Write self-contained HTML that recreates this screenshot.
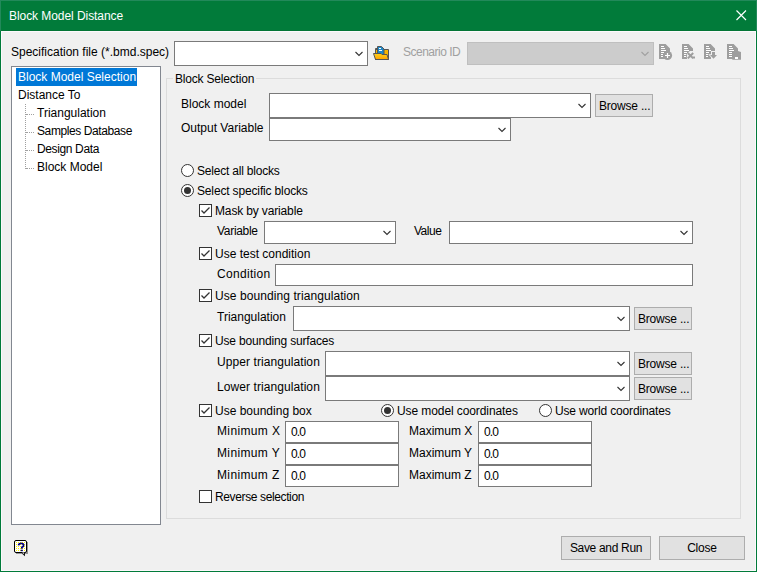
<!DOCTYPE html>
<html><head><meta charset="utf-8">
<style>
*{margin:0;padding:0;box-sizing:border-box}
html,body{width:757px;height:572px;overflow:hidden;background:#F0F0F0}
body{position:relative;font-family:"Liberation Sans",sans-serif;font-size:12px;color:#000}
.a{position:absolute}
.t{position:absolute;white-space:nowrap;line-height:14px;height:14px}
.box{position:absolute;background:#fff;border:1px solid #7A7A7A}
.btn{position:absolute;background:#E1E1E1;border:1px solid #ADADAD;text-align:left;line-height:14px;padding-top:4px;padding-left:3px;white-space:nowrap;letter-spacing:-0.2px}
.chev{position:absolute;width:9px;height:6px}
.cb{position:absolute;width:13px;height:13px;border:1px solid #333;background:#fff}
.rd{position:absolute;width:13px;height:13px;border:1px solid #333;border-radius:50%;background:#fff}
.rd.on::after{content:"";position:absolute;left:2px;top:2px;width:7px;height:7px;border-radius:50%;background:#333}
</style></head><body>
<!-- window frame -->
<div class="a" style="left:0;top:0;width:757px;height:572px;background:#017B3A"></div>
<div class="a" style="left:0;top:0;width:757px;height:1px;background:#22895A"></div>
<div class="a" style="left:0;top:0;width:1px;height:31px;background:#22895A"></div>
<div class="a" style="left:756px;top:0;width:1px;height:31px;background:#22895A"></div>
<div class="a" style="left:1px;top:30px;width:755px;height:1px;background:#037535"></div>
<div class="a" style="left:1px;top:31px;width:755px;height:540px;background:#FCF9FC"></div>
<div class="a" style="left:2px;top:32px;width:753px;height:538px;background:#F0F0F0"></div>
<div class="t" style="left:9px;top:9px;color:#fff;letter-spacing:-0.063px">Block Model Distance</div>
<svg class="a" style="left:735px;top:9px" width="13" height="13" viewBox="0 0 13 13"><path d="M1.5 1.5L11 11M11 1.5L1.5 11" stroke="#fff" stroke-width="1.15"/></svg>

<!-- top row -->
<div class="t" style="left:11px;top:45px">Specification file (*.bmd.spec)</div>
<div class="box" style="left:174px;top:41px;width:194px;height:25px"></div>
<svg class="chev" style="left:355px;top:51px" viewBox="0 0 9 6"><path d="M0.5 1L4 4.5L7.5 1" fill="none" stroke="#333" stroke-width="1.1"/></svg>
<svg class="a" style="left:372px;top:45px" width="18" height="16" viewBox="0 0 18 16">
  <defs><linearGradient id="fg" x1="0" y1="0" x2="0" y2="1"><stop offset="0" stop-color="#FFD41C"/><stop offset="1" stop-color="#FFA200"/></linearGradient></defs>
  <path d="M3.5 3.5H6V14.5H3.5Z" fill="#FFC107" stroke="#555"/>
  <path d="M3.5 4.5H16.5V14.5H3.5Z" fill="#F8B500" stroke="#555"/>
  <path d="M5.5 1.5H9.5L12 4V9.5H5.5Z" fill="#1E88C8" stroke="#555"/>
  <path d="M7 3.5H9M7 5.5H10" stroke="#fff"/>
  <path d="M1.5 8.5H9L10 9.5H15L16.5 14.5H3.5Z" fill="url(#fg)" stroke="#555" stroke-linejoin="round"/>
</svg>
<div class="t" style="left:403px;top:45px;color:#A0A0A0;letter-spacing:-0.500px">Scenario ID</div>
<div class="a" style="left:467px;top:42px;width:187px;height:23px;background:#CCCCCC;border:1px solid #BFBFBF"></div>
<svg class="chev" style="left:641px;top:51px" viewBox="0 0 9 6"><path d="M0.5 1L4 4.5L7.5 1" fill="none" stroke="#A0A0A0" stroke-width="1.1"/></svg>
<svg class="a" style="left:656px;top:42px" width="90" height="20" viewBox="0 0 90 20" shape-rendering="geometricPrecision">
 <g fill="#9E9E9E">
  <path d="M3 2H9.6L14 6.5V11H12V17H3Z"/>
  <circle cx="11.5" cy="13.5" r="4.6"/>
 </g>
 <g stroke="#fff" stroke-width="1">
  <path d="M5 4.5H8M5 6.5H9M5 8.5H10M5 10.5H8M5 12.5H7M5 14.5H7"/>
  <path d="M9 13.5H14M11.5 11V16" stroke-width="1.2"/>
 </g>
 <g transform="translate(23,0)">
  <path d="M3 2H9.6L14 6.5V9H11L8 12V17H3Z" fill="#9E9E9E"/>
  <path d="M5 4.5H8M5 6.5H9M5 8.5H10M5 10.5H8M5 12.5H7M5 14.5H7" stroke="#fff"/>
  <path d="M8.8 11L14.2 16.4M14.2 11L8.8 16.4" stroke="#F0F0F0" stroke-width="4"/>
  <path d="M8.8 11L14.2 16.4M14.2 11L8.8 16.4M13.8 15.5H16" stroke="#9E9E9E" stroke-width="2"/>
 </g>
 <g transform="translate(45,0)">
  <path d="M3 2H9.6L14 6.5V9H10V17H3Z" fill="#9E9E9E"/>
  <path d="M5 4.5H8M5 6.5H9M5 8.5H10M5 10.5H8M5 12.5H7M5 14.5H7" stroke="#fff"/>
  <path d="M11 10H14V13H16L12.5 16.8L9 13H11Z" fill="#9E9E9E" stroke="#F0F0F0" stroke-width="1.6" paint-order="stroke"/>
 </g>
 <g transform="translate(68,0)">
  <path d="M3 2H9.6L14 6.5V9L17 10V17.8H8.3V17H3Z" fill="#9E9E9E"/>
  <path d="M5 4.5H8M5 6.5H9M5 8.5H10M5 10.5H8M5 12.5H8M5 14.5H8" stroke="#fff"/>
  <rect x="11" y="15" width="3" height="2" fill="#fff"/>
 </g>
</svg>

<!-- tree -->
<div class="a" style="left:11px;top:66px;width:150px;height:459px;background:#fff;border:1px solid #828790"></div>
<div class="a" style="left:16px;top:68px;width:121px;height:18px;background:#0078D7"></div>
<div class="t" style="left:18px;top:70px;color:#fff">Block Model Selection</div>
<div class="t" style="left:18px;top:88px">Distance To</div>
<div class="a" style="left:25px;top:104px;width:1px;height:65px;border-left:1px dotted #A0A0A0"></div>
<div class="a" style="left:26px;top:114px;width:8px;height:1px;border-top:1px dotted #A0A0A0"></div>
<div class="a" style="left:26px;top:132px;width:8px;height:1px;border-top:1px dotted #A0A0A0"></div>
<div class="a" style="left:26px;top:150px;width:8px;height:1px;border-top:1px dotted #A0A0A0"></div>
<div class="a" style="left:26px;top:168px;width:8px;height:1px;border-top:1px dotted #A0A0A0"></div>
<div class="t" style="left:37px;top:106px">Triangulation</div>
<div class="t" style="left:37px;top:124px;letter-spacing:-0.400px">Samples Database</div>
<div class="t" style="left:37px;top:142px;letter-spacing:-0.370px">Design Data</div>
<div class="t" style="left:37px;top:160px">Block Model</div>

<!-- group box -->
<div class="a" style="left:166px;top:78px;width:575px;height:441px;border:1px solid #DCDCDC"></div>
<div class="t" style="left:173px;top:72px;padding:0 2px;background:#F0F0F0;letter-spacing:-0.193px">Block Selection</div>

<div class="t" style="left:181px;top:97px">Block model</div>
<div class="box" style="left:269px;top:93px;width:322px;height:25px"></div>
<svg class="chev" style="left:578px;top:103px" viewBox="0 0 9 6"><path d="M0.5 1L4 4.5L7.5 1" fill="none" stroke="#333" stroke-width="1.1"/></svg>
<div class="btn" style="left:595px;top:94px;width:58px;height:23px">Browse ...</div>

<div class="t" style="left:181px;top:121px">Output Variable</div>
<div class="box" style="left:269px;top:118px;width:242px;height:23px"></div>
<svg class="chev" style="left:498px;top:127px" viewBox="0 0 9 6"><path d="M0.5 1L4 4.5L7.5 1" fill="none" stroke="#333" stroke-width="1.1"/></svg>

<div class="rd" style="left:181px;top:164px"></div>
<div class="t" style="left:197px;top:164px;letter-spacing:-0.200px">Select all blocks</div>
<div class="rd on" style="left:181px;top:184px"></div>
<div class="t" style="left:197px;top:184px;letter-spacing:-0.152px">Select specific blocks</div>

<div class="cb" style="left:199px;top:204px"><svg class="a" style="left:-1px;top:-1px" width="13" height="13" viewBox="0 0 13 13"><path d="M2.5 6.5L5 9L10.5 3.5" fill="none" stroke="#333" stroke-width="1.3"/></svg></div>
<div class="t" style="left:215px;top:204px;letter-spacing:-0.147px">Mask by variable</div>
<div class="t" style="left:217px;top:224px;letter-spacing:-0.300px">Variable</div>
<div class="box" style="left:264px;top:221px;width:132px;height:23px"></div>
<svg class="chev" style="left:383px;top:230px" viewBox="0 0 9 6"><path d="M0.5 1L4 4.5L7.5 1" fill="none" stroke="#333" stroke-width="1.1"/></svg>
<div class="t" style="left:414px;top:224px;letter-spacing:-0.500px">Value</div>
<div class="box" style="left:449px;top:221px;width:244px;height:23px"></div>
<svg class="chev" style="left:680px;top:230px" viewBox="0 0 9 6"><path d="M0.5 1L4 4.5L7.5 1" fill="none" stroke="#333" stroke-width="1.1"/></svg>

<div class="cb" style="left:199px;top:247px"><svg class="a" style="left:-1px;top:-1px" width="13" height="13" viewBox="0 0 13 13"><path d="M2.5 6.5L5 9L10.5 3.5" fill="none" stroke="#333" stroke-width="1.3"/></svg></div>
<div class="t" style="left:215px;top:247px">Use test condition</div>
<div class="t" style="left:217px;top:267px;letter-spacing:0.312px">Condition</div>
<div class="box" style="left:275px;top:264px;width:418px;height:22px"></div>

<div class="cb" style="left:199px;top:289px"><svg class="a" style="left:-1px;top:-1px" width="13" height="13" viewBox="0 0 13 13"><path d="M2.5 6.5L5 9L10.5 3.5" fill="none" stroke="#333" stroke-width="1.3"/></svg></div>
<div class="t" style="left:215px;top:289px;letter-spacing:0.080px">Use bounding triangulation</div>
<div class="t" style="left:217px;top:310px">Triangulation</div>
<div class="box" style="left:293px;top:306px;width:337px;height:25px"></div>
<svg class="chev" style="left:617px;top:316px" viewBox="0 0 9 6"><path d="M0.5 1L4 4.5L7.5 1" fill="none" stroke="#333" stroke-width="1.1"/></svg>
<div class="btn" style="left:634px;top:307px;width:58px;height:23px">Browse ...</div>

<div class="cb" style="left:199px;top:334px"><svg class="a" style="left:-1px;top:-1px" width="13" height="13" viewBox="0 0 13 13"><path d="M2.5 6.5L5 9L10.5 3.5" fill="none" stroke="#333" stroke-width="1.3"/></svg></div>
<div class="t" style="left:215px;top:334px;letter-spacing:-0.170px">Use bounding surfaces</div>
<div class="t" style="left:217px;top:355px;letter-spacing:0.078px">Upper triangulation</div>
<div class="box" style="left:325px;top:351px;width:305px;height:25px"></div>
<svg class="chev" style="left:617px;top:361px" viewBox="0 0 9 6"><path d="M0.5 1L4 4.5L7.5 1" fill="none" stroke="#333" stroke-width="1.1"/></svg>
<div class="btn" style="left:634px;top:352px;width:58px;height:23px">Browse ...</div>
<div class="t" style="left:217px;top:380px;letter-spacing:0.078px">Lower triangulation</div>
<div class="box" style="left:325px;top:376px;width:305px;height:25px"></div>
<svg class="chev" style="left:617px;top:386px" viewBox="0 0 9 6"><path d="M0.5 1L4 4.5L7.5 1" fill="none" stroke="#333" stroke-width="1.1"/></svg>
<div class="btn" style="left:634px;top:377px;width:58px;height:23px">Browse ...</div>

<div class="cb" style="left:199px;top:404px"><svg class="a" style="left:-1px;top:-1px" width="13" height="13" viewBox="0 0 13 13"><path d="M2.5 6.5L5 9L10.5 3.5" fill="none" stroke="#333" stroke-width="1.3"/></svg></div>
<div class="t" style="left:215px;top:404px">Use bounding box</div>
<div class="rd on" style="left:381px;top:404px"></div>
<div class="t" style="left:397px;top:404px;letter-spacing:-0.090px">Use model coordinates</div>
<div class="rd" style="left:539px;top:404px"></div>
<div class="t" style="left:555px;top:404px;letter-spacing:-0.150px">Use world coordinates</div>

<div class="t" style="left:217px;top:424px;letter-spacing:0.362px">Minimum X</div>
<div class="box" style="left:285px;top:421px;width:114px;height:22px"></div>
<div class="t" style="left:291px;top:425px;letter-spacing:-0.850px">0.0</div>
<div class="t" style="left:217px;top:446px;letter-spacing:0.362px">Minimum Y</div>
<div class="box" style="left:285px;top:443px;width:114px;height:22px"></div>
<div class="t" style="left:291px;top:447px;letter-spacing:-0.850px">0.0</div>
<div class="t" style="left:217px;top:468px;letter-spacing:0.362px">Minimum Z</div>
<div class="box" style="left:285px;top:465px;width:114px;height:22px"></div>
<div class="t" style="left:291px;top:469px;letter-spacing:-0.850px">0.0</div>

<div class="t" style="left:409px;top:424px">Maximum X</div>
<div class="box" style="left:478px;top:421px;width:114px;height:22px"></div>
<div class="t" style="left:484px;top:425px;letter-spacing:-0.850px">0.0</div>
<div class="t" style="left:409px;top:446px">Maximum Y</div>
<div class="box" style="left:478px;top:443px;width:114px;height:22px"></div>
<div class="t" style="left:484px;top:447px;letter-spacing:-0.850px">0.0</div>
<div class="t" style="left:409px;top:468px">Maximum Z</div>
<div class="box" style="left:478px;top:465px;width:114px;height:22px"></div>
<div class="t" style="left:484px;top:469px;letter-spacing:-0.850px">0.0</div>

<div class="cb" style="left:199px;top:490px;border-color:#333"></div>
<div class="t" style="left:215px;top:490px;letter-spacing:-0.375px">Reverse selection</div>

<!-- bottom -->
<svg class="a" style="left:12px;top:538px" width="18" height="20" viewBox="0 0 18 20">
 <defs><pattern id="dots" width="2" height="2" patternUnits="userSpaceOnUse"><rect width="2" height="2" fill="#fff"/><rect width="1" height="1" fill="#FFF200"/></pattern></defs>
 <path d="M4 4H16V16H12L13 18.5L10 16H4Z" fill="#555" opacity="0.6"/>
 <rect x="2.5" y="2.5" width="12" height="12" rx="1.5" fill="url(#dots)" stroke="#000"/>
 <path d="M10 14.5L12.5 17.5V14.5" fill="#fff" stroke="#000" stroke-width="0.9"/>
 <path d="M6.6 7.4Q6.8 5.3 9.1 5.3Q11.6 5.3 11.6 7.3Q11.6 8.6 9.8 9.4V10.8" fill="none" stroke="#00007F" stroke-width="1.7"/><rect x="8.6" y="11.7" width="2.2" height="1.5" fill="#00007F"/>
</svg>
<div class="btn" style="left:561px;top:536px;width:90px;height:24px;padding-top:4px;text-align:center;padding-left:0;letter-spacing:-0.32px">Save and Run</div>
<div class="btn" style="left:659px;top:536px;width:86px;height:24px;padding-top:4px;text-align:center;padding-left:0">Close</div>
</body></html>
